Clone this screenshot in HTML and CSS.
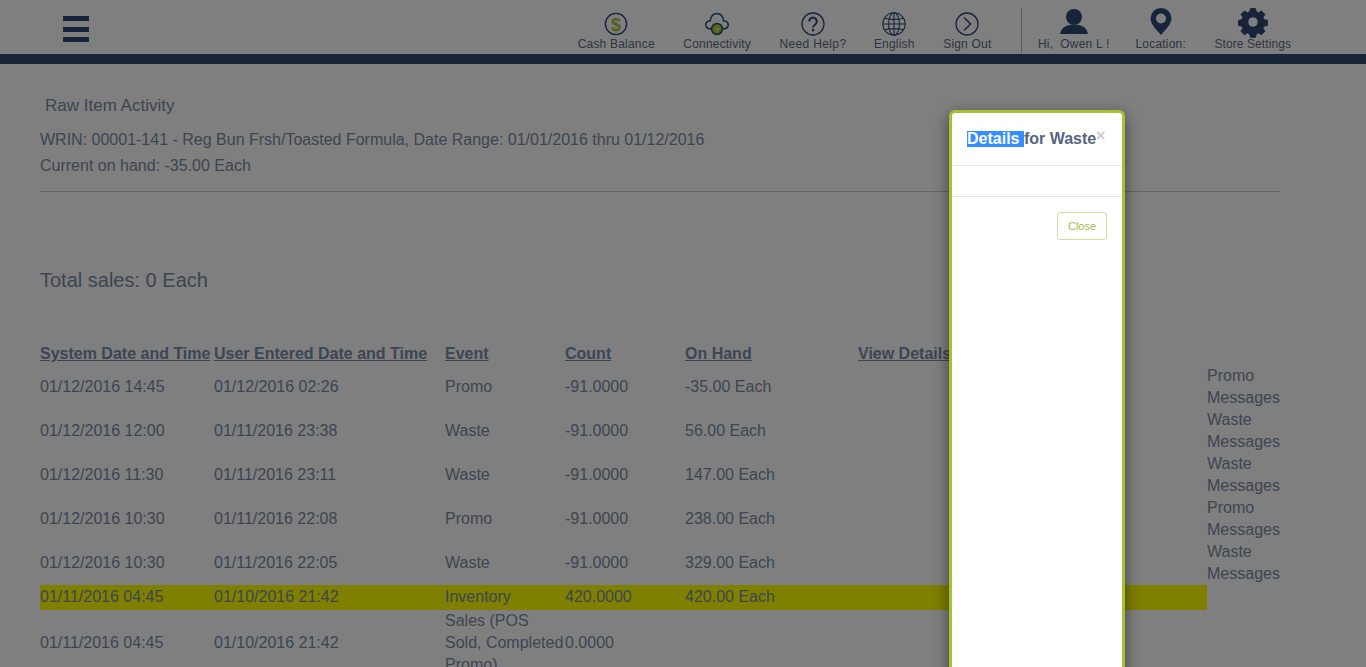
FILE: index.html
```html
<!DOCTYPE html>
<html lang="en">
<head>
<meta charset="utf-8">
<title>Raw Item Activity</title>
<link rel="stylesheet" href="styles.css">
</head>
<body>
<header class="topbar">
  <button class="burger" aria-label="Menu"><span></span><span></span><span></span></button>
  <nav class="nav">
    <a class="nav-item">
      <svg class="ico" viewBox="0 0 24 24"><circle cx="12" cy="12" r="10.600" fill="none" stroke="#2e4874" stroke-width="1.400"/><text x="12" y="18.600" text-anchor="middle" class="dollar">$</text></svg>
      <span>Cash Balance</span>
    </a>
    <a class="nav-item">
      <svg class="ico" viewBox="0 0 24 24"><path d="M6.500 17C2 17 .8 14.500.8 12.800.8 10.500 3 9 5.200 8.800 5.800 4.500 8.500 1.600 12 1.600s6 2.900 6.600 7.200c2.400.2 4.600 1.700 4.600 4 0 1.700-1.200 4.200-5.700 4.200" fill="none" stroke="#2e4874" stroke-width="1.500"/><circle cx="12" cy="17" r="5.500" fill="#a6c132" stroke="#2e4874" stroke-width="1.500"/><path d="M12 14v6M9 17h6" stroke="#d7e39a" stroke-width="1.200"/></svg>
      <span>Connectivity</span>
    </a>
    <a class="nav-item help">
      <svg class="ico" viewBox="0 0 24 24"><circle cx="12" cy="12" r="11" fill="none" stroke="#2e4874" stroke-width="1.300"/><path d="M8.200 9.400a3.800 3.800 0 1 1 6 3.100c-1.400 1-2.200 1.600-2.200 3.100" fill="none" stroke="#2e4874" stroke-width="2"/><rect x="10.900" y="16.900" width="2.300" height="2.400" fill="#2e4874"/></svg>
      <span>Need Help?</span>
    </a>
    <a class="nav-item">
      <svg class="ico" viewBox="0 0 24 24"><g fill="none" stroke="#2e4874" stroke-width="1.100"><circle cx="12" cy="12" r="11.200"/><ellipse cx="12" cy="12" rx="5.400" ry="11.200"/><path d="M12 .8v22.400M.8 12h22.400M2.600 6.200c5 1.600 13.800 1.600 18.800 0M2.600 17.800c5-1.600 13.800-1.600 18.800 0"/></g></svg>
      <span>English</span>
    </a>
    <a class="nav-item">
      <svg class="ico" viewBox="0 0 24 24"><circle cx="12" cy="12" r="11" fill="none" stroke="#2e4874" stroke-width="1.300"/><path d="M9 5.500l6.500 6.500L9 18.500" fill="none" stroke="#2e4874" stroke-width="1.500"/></svg>
      <span>Sign Out</span>
    </a>
    <i class="divider"></i>
    <a class="nav-item user">
      <svg class="ico" viewBox="0 0 28 25"><circle cx="14" cy="8" r="8" fill="#2e4874"/><path d="M0 25c1-4.500 3-7.500 9-9h10c6 1.500 8 4.500 9 9z" fill="#2e4874"/></svg>
      <span>Hi,&nbsp; Owen L !</span>
    </a>
    <a class="nav-item pin">
      <svg class="ico" viewBox="0 0 21 27"><path fill-rule="evenodd" d="M10.500 0A10.500 10.500 0 0 1 21 10.500C21 16 15 22 10.500 27 6 22 0 16 0 10.500A10.500 10.500 0 0 1 10.500 0zm0 5.500a5 5 0 1 0 0 10 5 5 0 0 0 0-10z" fill="#2e4874"/></svg>
      <span>Location:</span>
    </a>
    <a class="nav-item gear">
      <svg class="ico" viewBox="0 0 28 28"><path fill-rule="evenodd" fill="#2e4874" stroke="#2e4874" stroke-linejoin="round" d="M11.500.5h5l.7 3.300 2.400 1 2.800-1.900 3.500 3.500-1.900 2.800 1 2.400 3.400.8v5l-3.400.7-1 2.400 1.900 2.800-3.500 3.500-2.800-1.900-2.400 1-.7 3.400h-5l-.8-3.400-2.400-1-2.800 1.900-3.500-3.500 1.900-2.800-1-2.400-3.300-.7v-5l3.300-.8 1-2.400-1.900-2.800 3.500-3.500 2.800 1.900 2.400-1zM14 8.800a5.200 5.200 0 1 0 0 10.400 5.200 5.200 0 0 0 0-10.400z"/></svg>
      <span>Store Settings</span>
    </a>
  </nav>
</header>
<div class="rule-bar"></div>
<main class="content">
  <h1 class="title">Raw Item Activity</h1>
  <p class="meta">WRIN: 00001-141 - Reg Bun Frsh/Toasted Formula, Date Range: 01/01/2016 thru 01/12/2016</p>
  <p class="meta">Current on hand: -35.00 Each</p>
  <hr class="sep">
  <h2 class="total">Total sales: 0 Each</h2>
  <table class="grid">
    <colgroup><col class="c1"><col class="c2"><col class="c3"><col class="c4"><col class="c5"><col class="c6"><col class="c7"></colgroup>
    <thead>
      <tr><th>System Date and Time</th><th>User Entered Date and Time</th><th>Event</th><th>Count</th><th>On Hand</th><th>View Details</th><th></th></tr>
    </thead>
    <tbody>
      <tr><td>01/12/2016 14:45</td><td>01/12/2016 02:26</td><td>Promo</td><td>-91.0000</td><td>-35.00 Each</td><td></td><td>Promo Messages</td></tr>
      <tr><td>01/12/2016 12:00</td><td>01/11/2016 23:38</td><td>Waste</td><td>-91.0000</td><td>56.00 Each</td><td></td><td>Waste Messages</td></tr>
      <tr><td>01/12/2016 11:30</td><td>01/11/2016 23:11</td><td>Waste</td><td>-91.0000</td><td>147.00 Each</td><td></td><td>Waste Messages</td></tr>
      <tr><td>01/12/2016 10:30</td><td>01/11/2016 22:08</td><td>Promo</td><td>-91.0000</td><td>238.00 Each</td><td></td><td>Promo Messages</td></tr>
      <tr><td>01/12/2016 10:30</td><td>01/11/2016 22:05</td><td>Waste</td><td>-91.0000</td><td>329.00 Each</td><td></td><td>Waste Messages</td></tr>
      <tr class="hl"><td>01/11/2016 04:45</td><td>01/10/2016 21:42</td><td>Inventory</td><td>420.0000</td><td>420.00 Each</td><td></td><td class="plain"></td></tr>
      <tr><td>01/11/2016 04:45</td><td>01/10/2016 21:42</td><td>Sales (POS Sold, Completed Promo)</td><td>0.0000</td><td></td><td></td><td></td></tr>
    </tbody>
  </table>
</main>
<div class="backdrop"></div>
<section class="modal">
  <div class="modal-head">
    <h3 class="modal-title"><span class="picked">Details </span>for Waste</h3>
    <span class="x">×</span>
  </div>
  <div class="modal-body"></div>
  <div class="modal-foot"><button class="close">Close</button></div>
</section>
</body>
</html>
```
FILE: styles.css
```css
* { box-sizing: border-box; }
html, body { margin: 0; height: 667px; overflow: hidden; }
body { background: #fff; color: #7c8aa4; font-family: "Liberation Sans", Arial, sans-serif; font-size: 16px; line-height: 22px; position: relative; }

.topbar { height: 54px; display: flex; align-items: flex-start; justify-content: space-between; padding: 0 75px 0 63px; }
.burger { width: 26px; height: 26px; margin-top: 16px; padding: 0; border: 0; background: none; display: flex; flex-direction: column; justify-content: space-between; }
.burger span { display: block; height: 5px; background: #2e4874; }

.nav { display: flex; align-items: flex-start; gap: 28.5px; height: 54px; }
.nav-item { display: flex; flex-direction: column; align-items: center; color: #5f6a84; font-size: 12px; line-height: 14px; padding-top: 12px; position: relative; }
.nav-item span { letter-spacing: .2px; white-space: nowrap; display: block; padding-top: 25px; }
.help { margin-right: -1px; }
.help span { letter-spacing: .35px; }
.gear span { letter-spacing: .08px; }
.ico { position: absolute; top: 12px; left: 50%; width: 24px; height: 24px; transform: translateX(-50%); overflow: visible; }
.dollar { font: bold 18px "Liberation Sans", Arial, sans-serif; fill: #a6c132; }
.user { margin-right: -2.5px; }
.user .ico { width: 28px; height: 25px; top: 9px; }
.pin .ico { width: 21px; height: 27px; top: 8px; }
.gear .ico { width: 28px; height: 28px; top: 8px; }
.divider { width: 1px; height: 45px; margin: 8px -12.5px 0 1px; background: #bdbdbd; }

.rule-bar { height: 10px; background: #2e4874; }

.content { padding: 0 86px 0 40px; }
.title { margin: 31px 0 0 5px; font-size: 17px; font-weight: 400; line-height: 22px; }
.meta { margin: 0; line-height: 26px; }
.title + .meta { margin-top: 10px; }
.sep { margin: 12px 0 0; border: 0; border-top: 1px solid #c8c8c8; }
.total { margin: 76px 0 0; font-size: 20px; font-weight: 400; line-height: 24px; }

.grid { margin-top: 51px; width: 1240px; table-layout: fixed; border-collapse: separate; border-spacing: 0; }
.c1 { width: 174px; } .c2 { width: 231px; } .c3 { width: 120px; } .c4 { width: 120px; } .c5 { width: 173px; } .c6 { width: 349px; } .c7 { width: 73px; }
.grid th { padding: 0; text-align: left; font-weight: 700; text-decoration: underline; white-space: nowrap; }
.grid td { padding: 0; vertical-align: middle; }
.grid .hl td { height: 25px; padding-top: 1px; background: #ff0; vertical-align: top; }
.grid .hl td.plain { background: none; }

.backdrop { position: absolute; inset: 0; background: rgba(0, 0, 0, .5); }

.modal { position: absolute; left: 949px; top: 110px; width: 176px; height: 620px; background: #fff; border: 3px solid #a6c132; border-radius: 6px; box-shadow: 0 5px 15px rgba(0, 0, 0, .5); }
.modal-head { height: 53px; padding: 15px 15px 0; border-bottom: 1px solid #e5e5e5; position: relative; }
.modal-title { margin: 0; font-size: 16px; font-weight: 700; line-height: 22px; color: #56657f; white-space: nowrap; }
.picked { background: #338fff; color: #fff; display: inline-block; white-space: pre; line-height: 16px; }
.x { position: absolute; left: 144px; top: 12px; font-size: 16px; font-weight: 700; line-height: 22px; color: #ccc; }
.modal-body { height: 30px; }
.modal-foot { border-top: 1px solid #e5e5e5; padding: 15px 15px 0; display: flex; justify-content: flex-end; }
.close { width: 50px; height: 28px; padding: 0; background: #fff; border: 1px solid #d3de98; border-radius: 3px; color: #a9b84a; font: 11px "Liberation Sans", Arial, sans-serif; }
```
